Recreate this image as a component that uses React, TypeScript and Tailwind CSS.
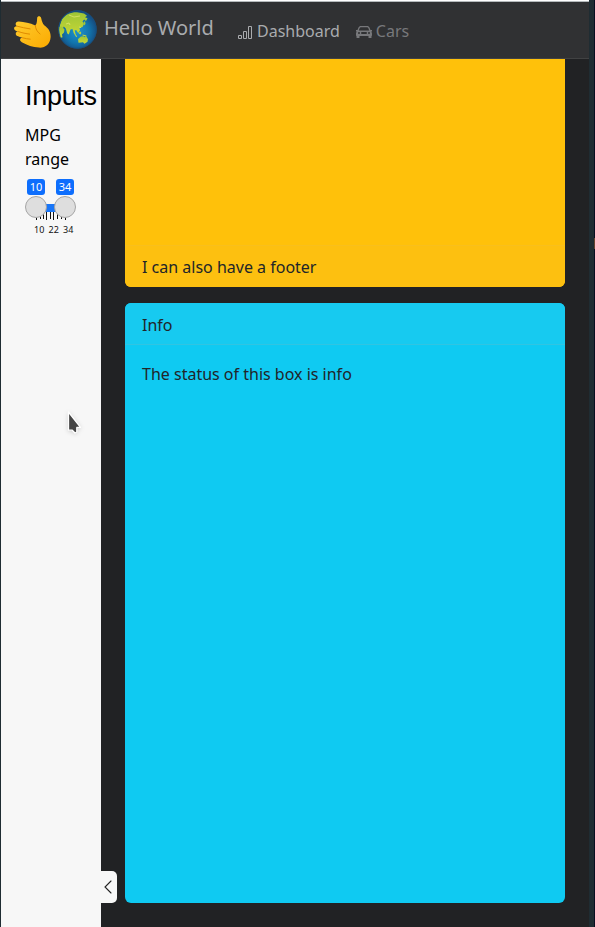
import React from "react";

function WaveIcon() {
  return (
    <svg className="block h-[34px] w-[39px]" viewBox="0 0 39 34">
      <defs>
        <linearGradient id="hand" x1="0" y1="0" x2="1" y2="1">
          <stop offset="0" stopColor="#ffce32" />
          <stop offset="1" stopColor="#fbaa00" />
        </linearGradient>
      </defs>
      <path
        d="M24.200 2.800C24.600.6 27.600.8 28.200 3.200c.6 2.600 1.200 5.200 3.300 7.400C35.500 13.500 38 17 37.600 22.500 37 29 32.500 33 26 32.600c-6.500-.2-11.500-2.600-17.200-5.400-2.700-1.300-2-4.500.7-4.400-1.900-.4-3.500-1-5-1.700-2.800-1.400-2-4.700.8-4.500-1.200-.4-2-.7-2.900-1.200-2.400-1.500-1.300-4.700 1.700-4.200-2.800-1.600-1.200-5.200 1.900-4.600C11 7.400 17 7.600 22.300 10.400 24.400 8.500 23.800 5.500 24.200 2.800Z"
        fill="url(#hand)"
      />
      <path
        d="M4.100 11.200c4.500 1.200 8.500 2 13 2.700M5.300 16.600c4 1.300 7.500 2 11.300 2.500M9.500 22.800c2.700.7 5 1.100 7.700 1.400M22.300 10.400c.3 3.600 1.700 6.300 4.700 8.500"
        fill="none"
        stroke="#df8b00"
        strokeWidth="1"
        strokeLinecap="round"
      />
    </svg>
  );
}

function GlobeIcon() {
  return (
    <svg className="block h-[39px] w-[39px]" viewBox="0 0 39 39">
      <defs>
        <radialGradient id="ocean" cx=".5" cy=".55" r=".52">
          <stop offset="0" stopColor="#1f93cf" />
          <stop offset=".6" stopColor="#1274ac" />
          <stop offset="1" stopColor="#164a7d" />
        </radialGradient>
        <linearGradient id="land" x1="0" y1="0" x2="0" y2="1">
          <stop offset="0" stopColor="#9dc436" />
          <stop offset="1" stopColor="#c9d936" />
        </linearGradient>
        <clipPath id="disc">
          <circle cx="19.500" cy="19.500" r="19" />
        </clipPath>
      </defs>
      <circle cx="19.500" cy="19.500" r="19.200" fill="url(#ocean)" />
      <g clipPath="url(#disc)" fill="url(#land)">
        <path d="M4 9C8 4 13 2 19 2.200l7 1.300 3 2.200-2 1.500 2.500 1-1.500 2.800-1.800-1.500-1.700 1.700 1.500 2.800-1.500 3-3 1 .5 2.500-1.800 2.500-2-3-1.500.5 1 4 1.500 2-1 .5-2.500-4-1.200-4-2 .5-1.700 5-1.500-1-1.500-5-2-2-1 2-3.500.5L2 15Z" />
        <path d="M.5 17 4 16.500l2.500 3-.5 3-2 2 .5 2.800L2 28Z" />
        <path d="m20 29 3-2.500 2.500-.2 1.500 1 1-1.500 2 3.500-.5 2.500-3 2-1.500-1.500-4.500.5Z" />
        <path d="m20.500 23 2-1.500.8 1.500-1 1.500Zm4 1.500 4 1-.5.900-3.500-.8Zm1-12 1.500-1.500.5 3-1.500 1.500Z" />
      </g>
      <path d="m8 14 3-1 1 2m9 2 2 .5M11 5l5 2 6-1" stroke="#dde66d" strokeWidth=".8" fill="none" />
      <circle cx="19.500" cy="19.500" r="18.800" fill="none" stroke="#17507f" strokeWidth=".8" />
    </svg>
  );
}

function BarsIcon() {
  return (
    <svg className="block size-4" viewBox="0 0 16 16" fill="none" stroke="currentColor">
      <path d="M1.500 11.500h3v3h-3zM6.500 7.500h3v7h-3zM11.500 2.500h3v12h-3z" />
    </svg>
  );
}

function CarIcon() {
  return (
    <svg className="block size-4" viewBox="0 0 16 16" fill="currentColor">
      <path
        fillRule="evenodd"
        d="M4.800 2h6.400c1 0 1.900.6 2.300 1.500l1 2.500H16v1.500h-.8c.5.500.8 1.200.8 2V11c0 .500-.200.900-.500 1.200v1.300a.5.5 0 0 1-.5.5h-2a.5.5 0 0 1-.5-.5V12h-9v1.500a.5.5 0 0 1-.5.5H1a.5.5 0 0 1-.5-.5v-1.300C.2 11.900 0 11.500 0 11V9.500c0-.8.3-1.500.8-2H0V6h1.500l1-2.500C2.900 2.600 3.800 2 4.800 2Zm0 1.300c-.5 0-.9.300-1.100.7L2.800 6.400h10.400L12.300 4c-.2-.4-.6-.7-1.100-.7ZM3 8a1 1 0 1 0 0 2 1 1 0 0 0 0-2Zm10 0a1 1 0 1 0 0 2 1 1 0 0 0 0-2ZM6 8a1 1 0 0 0 0 2h4a1 1 0 1 0 0-2Z"
      />
    </svg>
  );
}

function RangeSlider() {
  return (
    <div className="mt-2 text-[10px] leading-4">
      <div className="ml-[2px] flex gap-[11px] text-white">
        <span className="h-4 w-[18px] rounded-[3px] bg-[#0d6efd] text-center text-[11px]">10</span>
        <span className="h-4 w-[18px] rounded-[3px] bg-[#0d6efd] text-center text-[11px]">34</span>
      </div>
      <svg className="block h-[26px] w-[52px]" viewBox="0 0 52 26">
        <path
          d="M11.500 12v13M15.500 12v12M18.500 12v12M21.500 12v13M25.500 12v12M28.500 12v13M32.500 12v12M36.500 12v12M40.500 12v13"
          stroke="#111"
          strokeWidth="1"
        />
        <rect x="11" y="9" width="29" height="8" fill="#1976f8" />
        <circle cx="11" cy="12" r="10.500" fill="#dedede" stroke="#a5a5a5" />
        <circle cx="40" cy="12" r="10.500" fill="#dedede" stroke="#a5a5a5" />
      </svg>
      <div className="ml-[9px] mt-[2px] flex gap-[4px] text-[9px] leading-[14px] tracking-[0.1px] text-[#111]">
        <span>10</span><span>22</span><span>34</span>
      </div>
    </div>
  );
}

export default function App() {
  return (
    <div className="relative flex h-[927px] w-[595px] overflow-hidden bg-[#1f2c32] pl-px font-['Noto_Sans',sans-serif] text-base text-black">
      <div className="flex h-full w-[588px] flex-col bg-[#212224]">
        <div className="h-[2px] shrink-0 border-b border-[#b5babc] bg-white" />
        <nav className="flex h-[57px] shrink-0 border-b border-[#414243] bg-[#303133]">
          <div className="ml-[12px] mt-[13px]"><WaveIcon /></div>
          <div className="ml-[6px] mt-[8px]"><GlobeIcon /></div>
          <span className="ml-[7px] mt-[11px] w-[110px] whitespace-nowrap text-[20px] leading-[30px] text-[#a9abae]">Hello World</span>
          <a className="ml-[23px] mt-[17px] flex h-6 gap-1 text-[#a9abae]">
            <span className="mt-[5px]"><BarsIcon /></span>Dashboard
          </a>
          <a className="ml-[16px] mt-[17px] flex h-6 gap-1 text-[#77787b]">
            <span className="mt-[5px]"><CarIcon /></span>Cars
          </a>
        </nav>
        <div className="flex min-h-0 flex-1">
          <aside className="w-[100px] shrink-0 bg-[#f7f7f7] pl-6">
            <h3 className="mt-[21px] font-['Liberation_Sans',sans-serif] text-[27px] leading-8 tracking-[-0.3px]">Inputs</h3>
            <label className="mt-[11px] block leading-6">MPG<br />range</label>
            <RangeSlider />
          </aside>
          <button className="mt-[812px] flex h-8 w-4 shrink-0 items-center justify-center rounded-r-[5px] bg-[#f7f7f7]">
            <svg className="ml-[-2px] size-4" viewBox="0 0 16 16" fill="none" stroke="#222" strokeWidth="1.100" strokeLinecap="round">
              <path d="m11 2-6 6 6 6" />
            </svg>
          </button>
          <main className="ml-2 flex w-[440px] flex-col text-[#212529]">
            <section className="flex h-[228px] shrink-0 flex-col rounded-b-[6px] bg-[#ffc10a]">
              <div className="flex-1" />
              <footer className="h-[42px] rounded-b-[6px] border-t border-[#f8bf1d] bg-[#fdc010] px-[17px] pt-[9px] leading-6">I can also have a footer</footer>
            </section>
            <section className="mt-4 h-[600px] rounded-[6px] bg-[#0fcaf2]">
              <header className="h-[42px] rounded-t-[6px] border-b border-[#31c4e2] bg-[#17caf0] px-[17px] pt-[10px] leading-6">Info</header>
              <p className="px-[17px] pt-[17px] leading-6">The status of this box is info</p>
            </section>
          </main>
        </div>
      </div>
      <div className="ml-[5px] w-px bg-[#080d20]"><div className="mt-[238px] h-[11px] bg-[#65422f]" /></div>
      <svg className="absolute left-[66px] top-[409px] h-[27px] w-[18px] drop-shadow-sm" viewBox="0 0 18 27">
        <path d="M2.500 3v18.200h3.800l2.700 2.800 1.800-1v-4.600h3.700Z" fill="#454545" stroke="white" strokeWidth="1.300" strokeLinejoin="round" />
      </svg>
    </div>
  );
}
